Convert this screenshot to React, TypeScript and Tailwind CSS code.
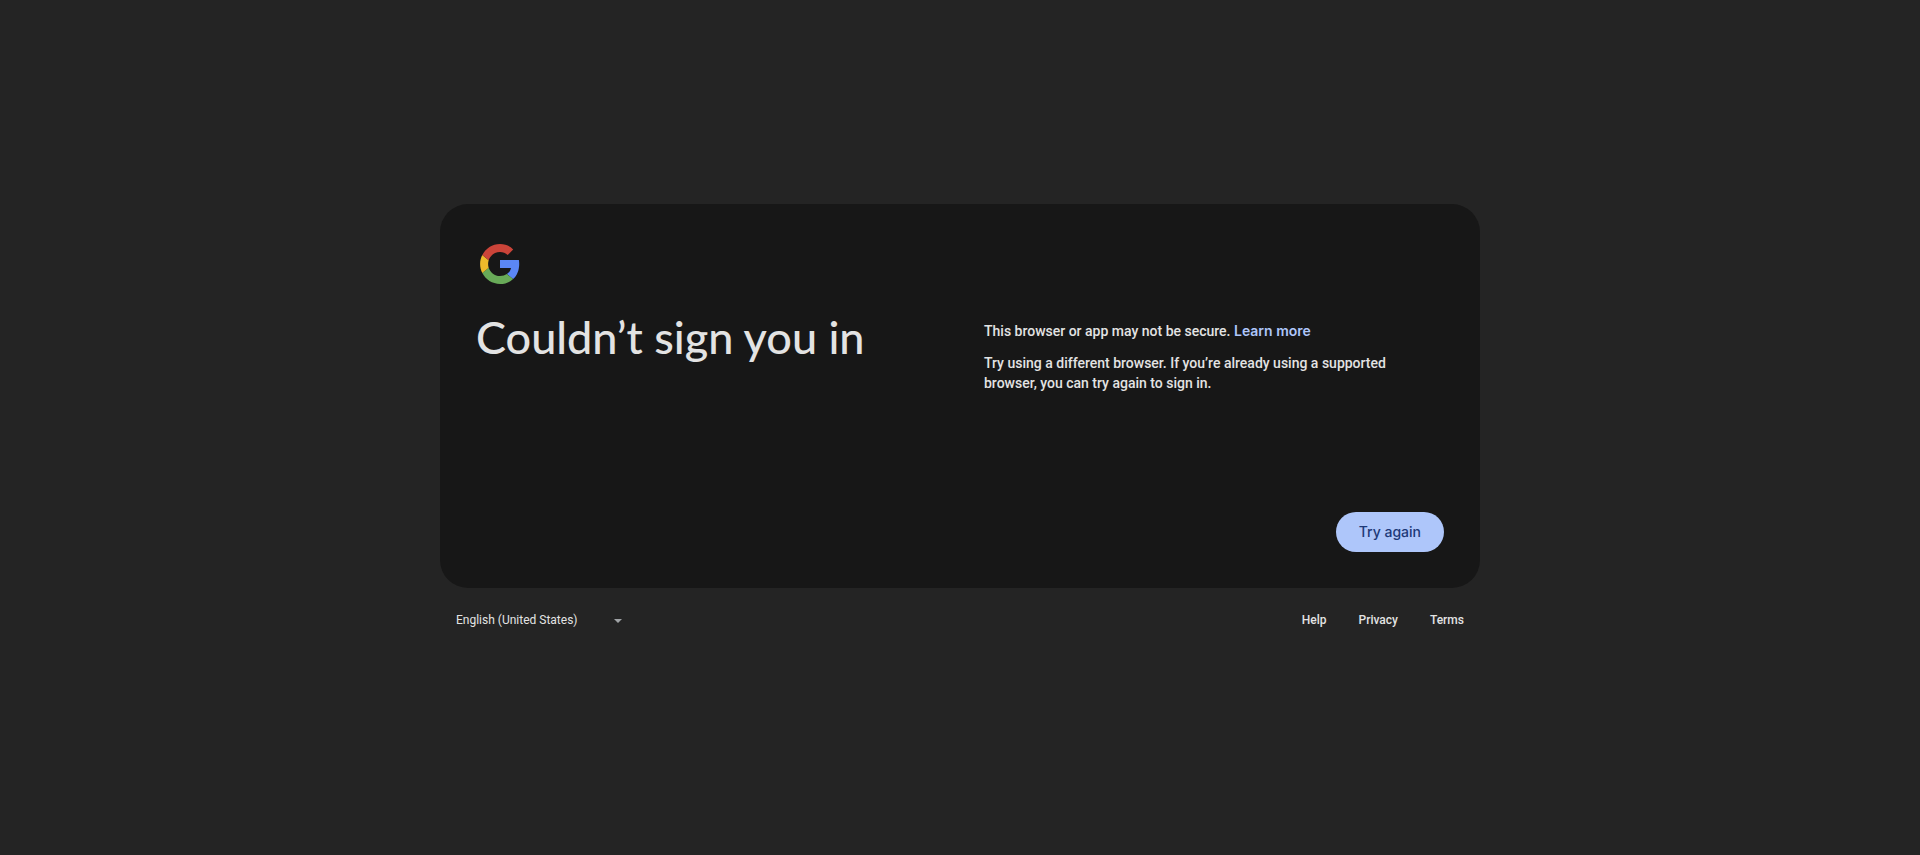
function GoogleLogo() {
  return (
    <svg viewBox="0 0 48 48" className="size-12" role="img" aria-label="Google">
      <path fill="#5b87f5" d="M24 20v8h11c-.5 2.600-1.900 4.600-4.100 6.100l6.200 5c3.900-3.600 6.100-8.900 6.100-15.200 0-1.300-.1-2.600-.3-3.900H24z" />
      <path fill="#68aa58" d="M6.300 33.100C9.600 39.600 16.300 44 24 44c5.300 0 9.800-1.800 13.100-4.900l-6.300-5.000c-1.800 1.200-4.100 1.900-6.800 1.900-5.300 0-9.700-3.500-11.300-8.300l-6.400 5.400z" />
      <path fill="#edba2b" d="M12.700 27.800c-.4-1.200-.6-2.500-.6-3.800s.2-2.600.6-3.800l-6.400-5.100C4.900 17.800 4.100 20.800 4.100 24s.8 6.400 2.200 9.100l6.400-5.300z" />
      <path fill="#cb4439" d="M24 12c2.900 0 5.600 1 7.700 3l5.500-5.600C33.800 6 29.300 4 24 4 16.300 4 9.600 8.500 6.300 15.100l6.400 5.100C14.300 15.500 18.700 12 24 12z" />
    </svg>
  );
}

const footerLinks = ["Help", "Privacy", "Terms"];

export default function App() {
  return (
    <div className="flex min-h-screen items-center justify-center bg-[#242424] font-[Roboto,sans-serif] text-[#e3e3e3]">
      <div className="w-full max-w-[1040px]">
        <main className="flex min-h-96 flex-col rounded-[28px] bg-[#171717] p-9">
          <GoogleLogo />
          <div className="grid grow grid-cols-2 gap-12 pt-6">
            <h1 className="font-[Lato,sans-serif] text-[45px] leading-[50px] font-medium">Couldn’t sign you in</h1>
            <div className="space-y-3 pt-[9px] pr-6 text-sm leading-5 font-medium">
              <p>
                This browser or app may not be secure.{" "}
                <a href="#learn" className="font-[Inter,sans-serif] font-semibold text-[#aec6fa]">Learn more</a>
              </p>
              <p>Try using a different browser. If you’re already using a supported browser, you can try again to sign in.</p>
            </div>
          </div>
          <div className="flex justify-end">
            <button type="button" className="h-10 rounded-full bg-[#aec6fa] px-[23px] font-[Inter,sans-serif] text-sm font-medium text-[#1d3978]">Try again</button>
          </div>
        </main>
        <footer className="flex items-center justify-between px-4 pt-[25px] pb-[23px] text-xs leading-[15px]">
          <div className="grid w-44 items-center">
            <select aria-label="Language" className="col-start-1 row-start-1 w-full appearance-none bg-transparent">
              <option>English (United States)</option>
            </select>
            <svg viewBox="0 0 8 4" className="pointer-events-none col-start-1 row-start-1 mr-2.5 h-1 w-2 justify-self-end" aria-hidden="true">
              <path d="M0 0h8L4 4z" fill="#a0a3a6" />
            </svg>
          </div>
          <nav className="flex gap-8 font-medium">
            {footerLinks.map((label) => (
              <a key={label} href={"#" + label.toLowerCase()}>{label}</a>
            ))}
          </nav>
        </footer>
      </div>
    </div>
  );
}
